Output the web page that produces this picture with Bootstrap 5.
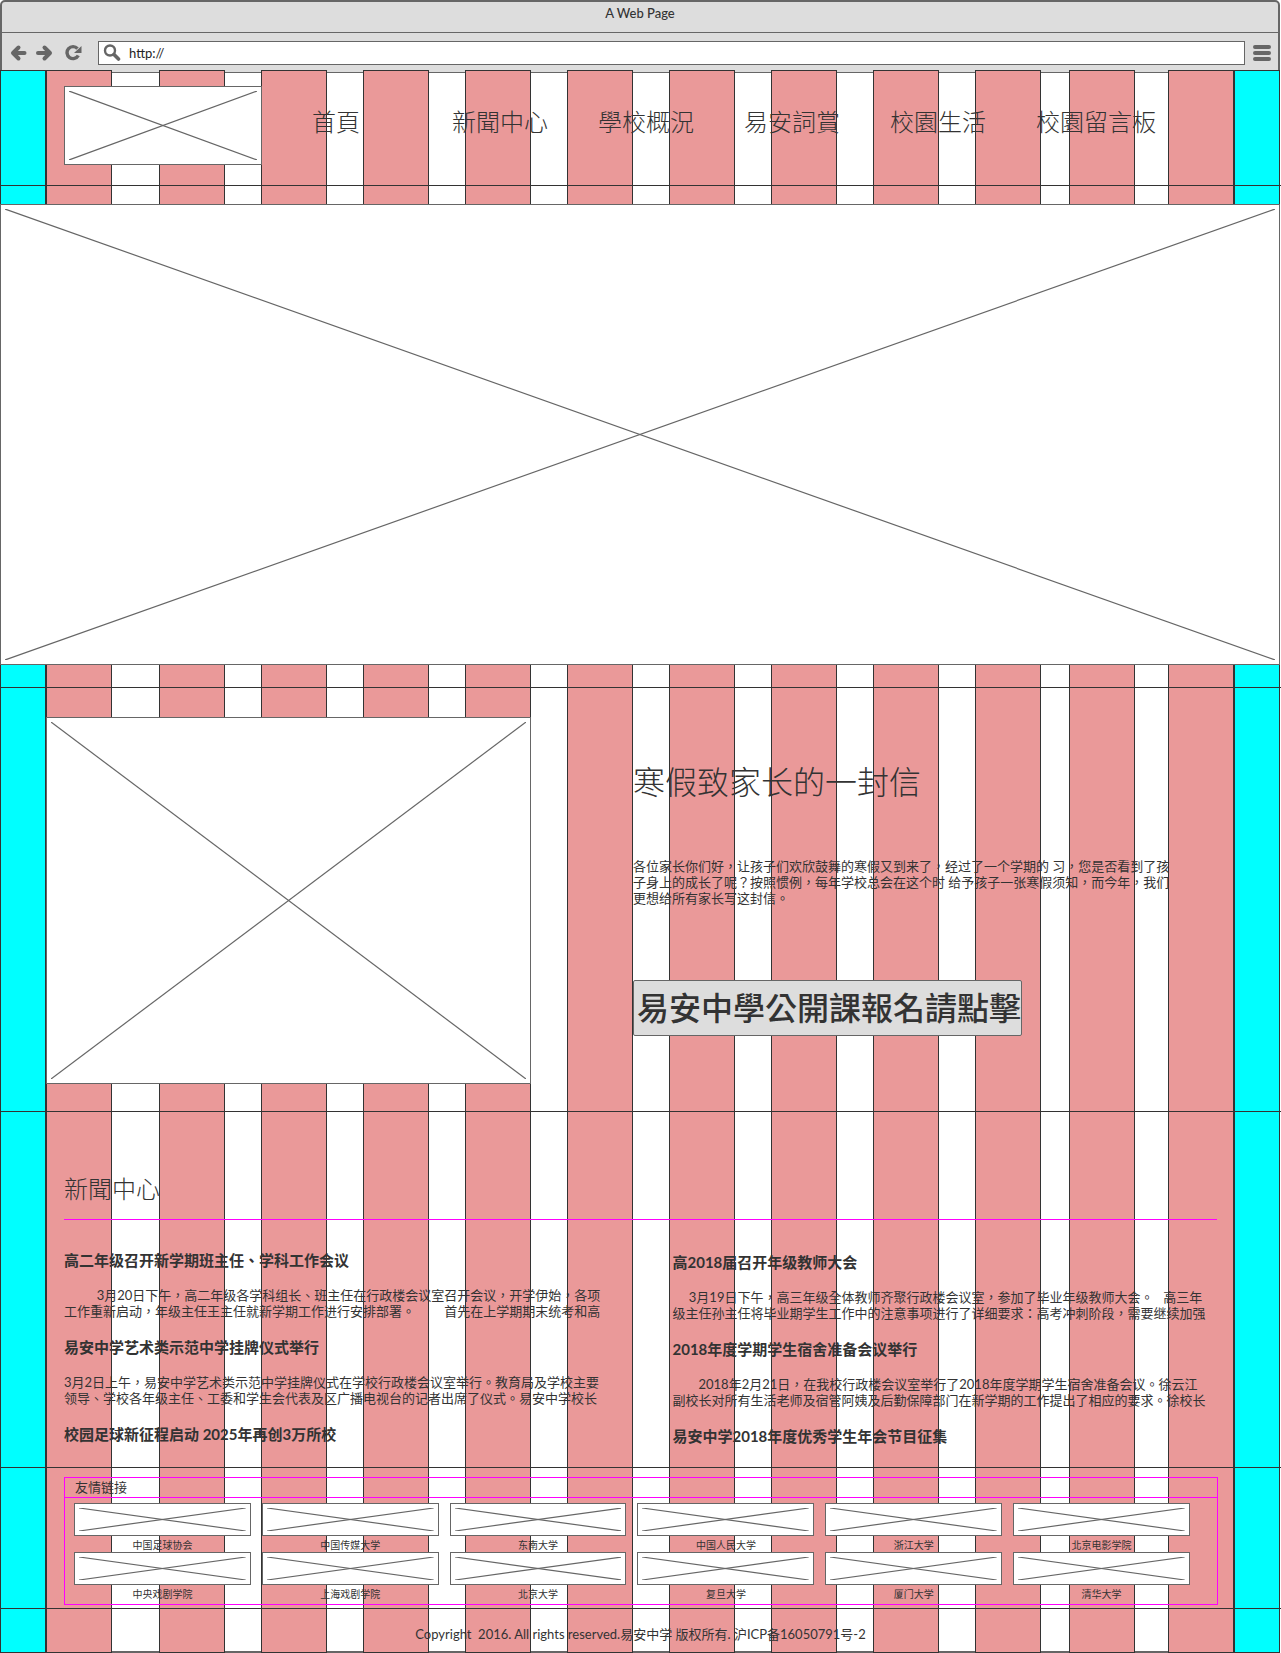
<!DOCTYPE html>
<html lang="zh-Hant">
<head>
<meta charset="utf-8">
<meta name="viewport" content="width=device-width, initial-scale=1">
<title>A Web Page</title>
<link href="https://cdn.jsdelivr.net/npm/bootstrap@5.3.0/dist/css/bootstrap.min.css" rel="stylesheet">
<style>
  :root { --ink: #333; --frame: #666; --chrome: #ddd; --stripe: #ea9999; --edge: #0ff; --rule: #f0f; }
  body { font-family: Lato, "Noto Sans CJK TC", sans-serif; font-size: 13px; line-height: 16px; color: var(--ink); background: #fff; }
  a { color: inherit; text-decoration: none; }
  h1, h2, h3, p { margin: 0; color: inherit; }

  /* browser frame */
  .browser { background: var(--chrome); border: 2px solid var(--frame); border-bottom: 1px solid var(--frame); border-radius: 5px 5px 0 0; margin-right: 1px; }
  .browser-title { height: 31px; padding-top: 3px; border-bottom: 1px solid var(--frame); font-weight: 500; }
  .browser-bar { height: 39px; padding: 8px 7px 7px 8px; }
  .tool { border: 0; background: none; padding: 0; width: 18px; height: 18px; color: var(--frame); display: block; }
  .tool svg { display: block; }
  .tools { gap: 8px; margin-right: 15px; }
  .tools .reload { margin-left: 3px; }
  .address { height: 24px; border: 1px solid var(--frame); background: #fff; padding-left: 4px; color: var(--frame); }
  .address input { border: 0; outline: 0; background: none; color: #222; height: 22px; padding: 0; }

  /* column guides and page share one grid cell */
  .sheet { display: grid; grid-template-columns: minmax(0, 1fr); margin-top: -3px; }
  .sheet > * { grid-area: 1 / 1; }
  .guides { display: grid; margin-right: 1px; grid-template-columns: 46fr 66fr 47fr 66fr 36fr 66fr 36fr 66fr 36fr 66fr 36fr 66fr 36fr 66fr 36fr 66fr 36fr 66fr 36fr 66fr 28fr 66fr 33fr 66fr 46fr; }
  .guides i { border-bottom: 2px solid var(--frame); margin-top: 3px; }
  .guides b { background: var(--stripe); border: 1px solid var(--ink); }
  .guides .side { background: var(--edge); }

  .band { border-bottom: 1px solid var(--ink); }
  .ph { display: block; background: #fff; border: 1px solid var(--frame); padding: 4px; }
  .ph svg { display: block; width: 100%; height: 100%; stroke: var(--frame); stroke-width: 1.2; }

  .serif { font-family: "Liberation Serif", "Noto Sans CJK TC", serif; font-weight: 300; }
  .head { padding: 16px 64px 20px; }
  .logo { width: 198px; height: 79px; flex: none; }
  .menu { gap: 50px; padding-left: 50px; font-size: 24px; line-height: 32px; padding-bottom: 6px; }
  .menu .home { margin-right: 42px; }
  .hero { padding: 18px 1px 22px 0; }
  .hero .ph { height: 461px; }
  .letter { display: grid; grid-template-columns: 485fr 602fr; column-gap: 102px; padding: 29px 46px 27px; }
  .letter .ph { height: 367px; }
  .letter h1 { font-size: 32px; line-height: 40px; margin-top: 46px; }
  .letter p { margin-top: 55px; white-space: nowrap; }
  .signup { margin-top: 74px; height: 56px; padding: 2px 0 0 3px; border: 1px solid var(--frame); border-radius: 2px; background: var(--chrome); color: var(--ink); font-size: 32px; line-height: 40px; white-space: nowrap; font-weight: 500; }
  .news { padding: 62px 64px 21px; }
  .news h2 { font-size: 24px; line-height: 32px; padding-bottom: 13px; border-bottom: 1px solid var(--rule); }
  .news-cols { display: grid; grid-template-columns: 1fr 1fr; column-gap: 64px; }
  .stories { display: flex; flex-direction: column; gap: 18px; padding-top: 30px; }
  .stories.later { padding-top: 32px; }
  .stories h3 { font-size: 15px; line-height: 20px; font-weight: 700; }
  .stories p { margin-top: 17px; white-space: nowrap; }
  .friends { padding: 9px 63px 3px 64px; }
  .friends-box { border: 1px solid var(--rule); }
  .friends-box h2 { font-size: 13px; line-height: 19px; font-weight: 400; padding-left: 10px; border-bottom: 1px solid var(--rule); }
  .friends-list { display: grid; grid-template-columns: repeat(6, 1fr); column-gap: 11px; padding: 5px 27px 3px 9px; margin: 0; list-style: none; }
  .friends-list .ph { height: 33px; }
  .friends-list span { display: block; text-align: center; font-size: 10px; line-height: 16px; padding-top: 1px; height: 16px; }
  .foot { padding: 15px 0 9px; line-height: 20px; white-space: pre; }
</style>
<script src="https://cdn.jsdelivr.net/npm/bootstrap@5.3.0/dist/js/bootstrap.bundle.min.js"></script>
</head>
<body>
<svg width="0" height="0" class="d-none" aria-hidden="true">
  <symbol id="cross" viewBox="0 0 100 100" preserveAspectRatio="none"><line x1="0" y1="0" x2="100" y2="100" vector-effect="non-scaling-stroke"/><line x1="0" y1="100" x2="100" y2="0" vector-effect="non-scaling-stroke"/></symbol>
</svg>

<div class="browser">
  <div class="browser-title text-center">A Web Page</div>
  <div class="browser-bar d-flex align-items-center">
    <div class="tools d-flex">
      <button class="tool" type="button" aria-label="Back"><svg width="18" height="18" viewBox="0 0 18 18" fill="none" stroke="currentColor" stroke-width="4" stroke-linecap="round"><path d="M5 9H14.500"/><path d="M8.500 3.500 3 9l5.500 5.500" stroke-linejoin="round" stroke-width="4"/></svg></button>
      <button class="tool" type="button" aria-label="Forward"><svg width="18" height="18" viewBox="0 0 18 18" fill="none" stroke="currentColor" stroke-width="4" stroke-linecap="round"><path d="M2 9H12"/><path d="M8.500 3.500 14 9l-5.500 5.500" stroke-linejoin="round" stroke-width="4"/></svg></button>
      <button class="tool reload" type="button" aria-label="Reload"><svg width="18" height="18" viewBox="0 0 18 18"><path d="M13.300 11.500A6 6 0 1 1 12.500 4.600" fill="none" stroke="currentColor" stroke-width="3.400"/><path d="M16.500 2V9H9Z" fill="currentColor"/></svg></button>
    </div>
    <label class="address d-flex align-items-center flex-grow-1">
      <svg width="18" height="18" viewBox="0 0 18 18" fill="none" stroke="currentColor"><circle cx="7" cy="6.500" r="5" stroke-width="2.400"/><path d="m11 10.500 4.500 4.500" stroke-width="3.600" stroke-linecap="round"/></svg>
      <input class="flex-grow-1 ms-2" type="text" value="http://" aria-label="Address">
    </label>
    <button class="tool ms-2" type="button" aria-label="Menu"><svg width="18" height="18" viewBox="0 0 18 18" stroke="currentColor" stroke-width="4" stroke-linecap="round"><path d="M2 3H16M2 9H16M2 15H16"/></svg></button>
  </div>
</div>

<div class="sheet">
  <div class="guides" aria-hidden="true"><b class="side"></b><b></b><i></i><b></b><i></i><b></b><i></i><b></b><i></i><b></b><i></i><b></b><i></i><b></b><i></i><b></b><i></i><b></b><i></i><b></b><i></i><b></b><i></i><b></b><b class="side"></b></div>

  <div class="page">
    <header class="band head d-flex align-items-center">
      <a href="#" class="ph logo" aria-label="首頁"><svg><use href="#cross"/></svg></a>
      <nav class="menu serif d-flex text-nowrap">
        <a href="#" class="home">首頁</a><a href="#news">新聞中心</a><a href="#">學校概況</a><a href="#">易安詞賞</a><a href="#">校園生活</a><a href="#">校園留言板</a>
      </nav>
    </header>

    <section class="band hero"><div class="ph"><svg><use href="#cross"/></svg></div></section>

    <section class="band letter">
      <div class="ph"><svg><use href="#cross"/></svg></div>
      <div>
        <h1 class="serif">寒假致家长的一封信</h1>
        <p>各位家长你们好，让孩子们欢欣鼓舞的寒假又到来了，经过了一个学期的 习，您是否看到了孩<br>子身上的成长了呢？按照惯例，每年学校总会在这个时 给予孩子一张寒假须知，而今年，我们<br>更想给所有家长写这封信。</p>
        <button type="button" class="signup serif">易安中學公開課報名請點擊</button>
      </div>
    </section>

    <section class="band news" id="news">
      <h2 class="serif">新聞中心</h2>
      <div class="news-cols">
        <div class="stories">
          <article><h3>高二年级召开新学期班主任、学科工作会议</h3>
            <p>&#12288;&#12288;&nbsp;&nbsp;3月20日下午，高二年级各学科组长、班主任在行政楼会议室召开会议，开学伊始，各项<br>工作重新启动，年级主任王主任就新学期工作进行安排部署。&#12288;&#12288;&nbsp;首先在上学期期末统考和高</p></article>
          <article><h3>易安中学艺术类示范中学挂牌仪式举行</h3>
            <p>3月2日上午，易安中学艺术类示范中学挂牌仪式在学校行政楼会议室举行。教育局及学校主要<br>领导、学校各年级主任、工委和学生会代表及区广播电视台的记者出席了仪式。易安中学校长</p></article>
          <article><h3>校园足球新征程启动 2025年再创3万所校</h3></article>
        </div>
        <div class="stories later">
          <article><h3>高2018届召开年级教师大会</h3>
            <p>&#12288;&nbsp;3月19日下午，高三年级全体教师齐聚行政楼会议室，参加了毕业年级教师大会。&emsp;高三年<br>级主任孙主任将毕业期学生工作中的注意事项进行了详细要求：高考冲刺阶段，需要继续加强</p></article>
          <article><h3>2018年度学期学生宿舍准备会议举行</h3>
            <p>&#12288;&#12288;2018年2月21日，在我校行政楼会议室举行了2018年度学期学生宿舍准备会议。徐云江<br>副校长对所有生活老师及宿管阿姨及后勤保障部门在新学期的工作提出了相应的要求。徐校长</p></article>
          <article><h3>易安中学2018年度优秀学生年会节目征集</h3></article>
        </div>
      </div>
    </section>

    <section class="band friends">
      <div class="friends-box">
        <h2>友情链接</h2>
        <ul class="friends-list">
          <li><a href="#"><div class="ph"><svg><use href="#cross"/></svg></div><span>中国足球协会</span></a></li>
          <li><a href="#"><div class="ph"><svg><use href="#cross"/></svg></div><span>中国传媒大学</span></a></li>
          <li><a href="#"><div class="ph"><svg><use href="#cross"/></svg></div><span>东南大学</span></a></li>
          <li><a href="#"><div class="ph"><svg><use href="#cross"/></svg></div><span>中国人民大学</span></a></li>
          <li><a href="#"><div class="ph"><svg><use href="#cross"/></svg></div><span>浙江大学</span></a></li>
          <li><a href="#"><div class="ph"><svg><use href="#cross"/></svg></div><span>北京电影学院</span></a></li>
          <li><a href="#"><div class="ph"><svg><use href="#cross"/></svg></div><span>中央戏剧学院</span></a></li>
          <li><a href="#"><div class="ph"><svg><use href="#cross"/></svg></div><span>上海戏剧学院</span></a></li>
          <li><a href="#"><div class="ph"><svg><use href="#cross"/></svg></div><span>北京大学</span></a></li>
          <li><a href="#"><div class="ph"><svg><use href="#cross"/></svg></div><span>复旦大学</span></a></li>
          <li><a href="#"><div class="ph"><svg><use href="#cross"/></svg></div><span>厦门大学</span></a></li>
          <li><a href="#"><div class="ph"><svg><use href="#cross"/></svg></div><span>清华大学</span></a></li>
        </ul>
      </div>
    </section>

    <footer class="foot text-center">Copyright  2016. All rights reserved.易安中学 版权所有. 沪ICP备16050791号-2</footer>
  </div>
</div>
</body>
</html>
